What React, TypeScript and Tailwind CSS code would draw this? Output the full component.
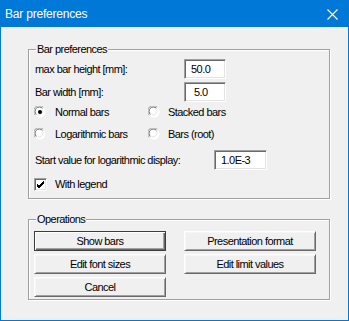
import React from "react";

const font = { fontFamily: '"Liberation Sans", Arial, sans-serif' };

function Radio({ checked }: { checked?: boolean }) {
  return (
    <svg width="12" height="12" viewBox="0 0 12 12" className="shrink-0">
      <circle cx="6" cy="6" r="5.5" fill="#ffffff" />
      <path d="M1.2 9.2 A5.5 5.5 0 0 1 9.2 1.2" fill="none" stroke="#a0a0a0" strokeWidth="1" />
      <path d="M2.3 8.4 A4.3 4.3 0 0 1 8.4 2.3" fill="none" stroke="#696969" strokeWidth="1" />
      <path d="M9.6 2.6 A5.5 5.5 0 0 1 2.6 9.6" fill="none" stroke="#ffffff" strokeWidth="1" />
      <path d="M8.8 3.4 A4.3 4.3 0 0 1 3.4 8.8" fill="none" stroke="#e3e3e3" strokeWidth="1" />
      {checked && <circle cx="6" cy="6" r="2" fill="#000" />}
    </svg>
  );
}

function Check() {
  return (
    <div className="w-[13px] h-[13px] shrink-0 bg-white border border-t-[#a0a0a0] border-l-[#a0a0a0] border-r-white border-b-white shadow-[inset_1px_1px_0_#696969,inset_-1px_-1px_0_#e3e3e3] flex items-center justify-center">
      <svg width="9" height="9" viewBox="0 0 9 9">
        <path d="M1 4 L3 6 L8 1 M1 5 L3 7 L8 2 M1 6 L3 8 L8 3" fill="none" stroke="#000" strokeWidth="1" />
      </svg>
    </div>
  );
}

function Field({ value, w, pl }: { value: string; w: string; pl: string }) {
  return (
    <div
      className={`${w} ${pl} h-[20px] bg-white border border-t-[#a0a0a0] border-l-[#a0a0a0] border-r-white border-b-white shadow-[inset_1px_1px_0_#696969,inset_-1px_-1px_0_#e3e3e3] flex items-center text-[11px] tracking-[-0.55px] text-black`}
    >
      {value}
    </div>
  );
}

function Btn({ label, def }: { label: string; def?: boolean }) {
  return (
    <div
      className={
        def
          ? "w-[132px] h-[20px] bg-[#f0f0f0] border border-[#3c3c3c] shadow-[inset_1px_1px_0_#ffffff,inset_-1px_-1px_0_#696969,inset_-2px_-2px_0_#a0a0a0] flex items-center justify-center text-[11px] tracking-[-0.55px] text-black"
          : "w-[132px] h-[20px] bg-[#f0f0f0] border border-t-white border-l-white border-r-[#696969] border-b-[#696969] shadow-[inset_1px_1px_0_#f6f6f6,inset_-1px_-1px_0_#a0a0a0] flex items-center justify-center text-[11px] tracking-[-0.55px] text-black"
      }
    >
      {label}
    </div>
  );
}

function Group({ title, children, className }: { title: string; children: React.ReactNode; className: string }) {
  return (
    <div className={`relative w-[302px] border border-[#a0a0a0] shadow-[1px_1px_0_#ffffff,inset_1px_1px_0_#ffffff] ${className}`}>
      <div className="absolute left-[7px] top-[-8px] px-[1px] bg-[#f0f0f0] text-[11px] tracking-[-0.55px] leading-[14px] text-black">
        {title}
      </div>
      {children}
    </div>
  );
}

export default function App() {
  return (
    <div style={font} className="w-[349px] h-[321px] flex flex-col bg-[#0078d7] text-black select-none">
      <div className="h-[27px] shrink-0 flex items-center justify-between pl-[5px] pr-[11px] text-white text-[12px] tracking-[-0.2px]">
        <span className="mt-[1px]">Bar preferences</span>
        <svg width="11" height="11" viewBox="0 0 11 11" className="mt-[1px]">
          <path d="M0.5 0.5 L10.5 10.5 M10.5 0.5 L0.5 10.5" stroke="#ffffff" strokeWidth="1.1" fill="none" />
        </svg>
      </div>
      <div className="flex-1 mx-[1px] mb-[1px] bg-[#f0f0f0] pl-[27px] pt-[22px] flex flex-col">
        <Group title="Bar preferences" className="pt-[9px] pb-[4px]">
          <div className="flex flex-col text-[11px] tracking-[-0.55px]">
            <div className="h-[20px] flex items-center">
              <span className="w-[155px] pl-[6px]">max bar height [mm]:</span>
              <Field value="50.0" w="w-[42px]" pl="pl-[6px]" />
            </div>
            <div className="h-[20px] mt-[3px] flex items-center">
              <span className="w-[155px] pl-[6px]">Bar width [mm]:</span>
              <Field value="5.0" w="w-[42px]" pl="pl-[9px]" />
            </div>
            <div className="h-[20px] flex items-center pl-[5px]">
              <div className="w-[114px] flex items-center gap-[9px]">
                <Radio checked />
                <span>Normal bars</span>
              </div>
              <div className="flex items-center gap-[8px]">
                <Radio />
                <span>Stacked bars</span>
              </div>
            </div>
            <div className="h-[20px] mt-[2px] flex items-center pl-[5px]">
              <div className="w-[114px] flex items-center gap-[9px]">
                <Radio />
                <span>Logarithmic bars</span>
              </div>
              <div className="flex items-center gap-[8px]">
                <Radio />
                <span>Bars (root)</span>
              </div>
            </div>
            <div className="h-[20px] mt-[6px] flex items-center">
              <span className="w-[185px] pl-[6px]">Start value for logarithmic display:</span>
              <Field value="1.0E-3" w="w-[53px]" pl="pl-[6px]" />
            </div>
            <div className="h-[20px] mt-[4px] flex items-center pl-[5px] gap-[8px]">
              <Check />
              <span>With legend</span>
            </div>
          </div>
        </Group>
        <Group title="Operations" className="mt-[20px] pt-[11px] pb-[2px]">
          <div className="pl-[5px] grid grid-cols-[132px_132px] gap-x-[18px] gap-y-[3px]">
            <Btn label="Show bars" def />
            <Btn label="Presentation format" />
            <Btn label="Edit font sizes" />
            <Btn label="Edit limit values" />
            <Btn label="Cancel" />
          </div>
        </Group>
      </div>
    </div>
  );
}
